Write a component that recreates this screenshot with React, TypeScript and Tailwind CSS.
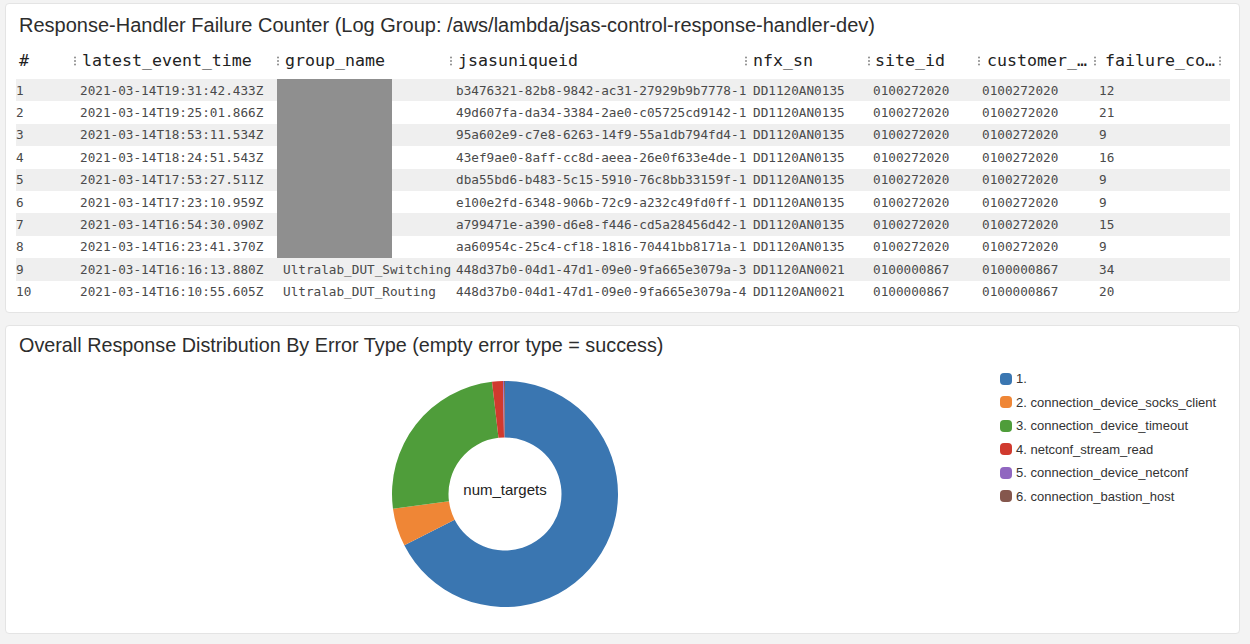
import React from "react";

const COLS = [57, 203, 173, 295, 123, 110, 116, 137];
const DATA_PL = [0, 7, 7, 7, 9, 6, 5, 6];
const HEAD_ML = [0, 5, 5, 5, 5, 4, 6, 8];
const HEADERS = ["#", "latest_event_time", "group_name", "jsasuniqueid", "nfx_sn", "site_id", "customer_…", "failure_co…"];

const rows: string[][] = [
  ["1", "2021-03-14T19:31:42.433Z", "", "b3476321-82b8-9842-ac31-27929b9b7778-1", "DD1120AN0135", "0100272020", "0100272020", "12"],
  ["2", "2021-03-14T19:25:01.866Z", "", "49d607fa-da34-3384-2ae0-c05725cd9142-1", "DD1120AN0135", "0100272020", "0100272020", "21"],
  ["3", "2021-03-14T18:53:11.534Z", "", "95a602e9-c7e8-6263-14f9-55a1db794fd4-1", "DD1120AN0135", "0100272020", "0100272020", "9"],
  ["4", "2021-03-14T18:24:51.543Z", "", "43ef9ae0-8aff-cc8d-aeea-26e0f633e4de-1", "DD1120AN0135", "0100272020", "0100272020", "16"],
  ["5", "2021-03-14T17:53:27.511Z", "", "dba55bd6-b483-5c15-5910-76c8bb33159f-1", "DD1120AN0135", "0100272020", "0100272020", "9"],
  ["6", "2021-03-14T17:23:10.959Z", "", "e100e2fd-6348-906b-72c9-a232c49fd0ff-1", "DD1120AN0135", "0100272020", "0100272020", "9"],
  ["7", "2021-03-14T16:54:30.090Z", "", "a799471e-a390-d6e8-f446-cd5a28456d42-1", "DD1120AN0135", "0100272020", "0100272020", "15"],
  ["8", "2021-03-14T16:23:41.370Z", "", "aa60954c-25c4-cf18-1816-70441bb8171a-1", "DD1120AN0135", "0100272020", "0100272020", "9"],
  ["9", "2021-03-14T16:16:13.880Z", "Ultralab_DUT_Switching", "448d37b0-04d1-47d1-09e0-9fa665e3079a-3", "DD1120AN0021", "0100000867", "0100000867", "34"],
  ["10", "2021-03-14T16:10:55.605Z", "Ultralab_DUT_Routing", "448d37b0-04d1-47d1-09e0-9fa665e3079a-4", "DD1120AN0021", "0100000867", "0100000867", "20"],
];

const segments = [
  { a0: 0, a1: 243, color: "#3a76b1" },
  { a0: 243, a1: 262.5, color: "#ef8636" },
  { a0: 262.5, a1: 353.4, color: "#4f9d3a" },
  { a0: 353.4, a1: 359.0, color: "#d03a2e" },
  { a0: 359.0, a1: 359.5, color: "#9066c0" },
  { a0: 359.5, a1: 360, color: "#85574d" },
];

const legend = [
  { label: "1.", color: "#3a76b1" },
  { label: "2. connection_device_socks_client", color: "#ef8636" },
  { label: "3. connection_device_timeout", color: "#4f9d3a" },
  { label: "4. netconf_stream_read", color: "#d03a2e" },
  { label: "5. connection_device_netconf", color: "#9066c0" },
  { label: "6. connection_bastion_host", color: "#85574d" },
];

function arcPath(a0: number, a1: number, r0: number, r1: number, cx: number, cy: number) {
  const p = (a: number, r: number) => {
    const t = ((a - 90) * Math.PI) / 180;
    return [cx + r * Math.cos(t), cy + r * Math.sin(t)];
  };
  const large = a1 - a0 > 180 ? 1 : 0;
  const [x0, y0] = p(a0, r1);
  const [x1, y1] = p(a1, r1);
  const [x2, y2] = p(a1, r0);
  const [x3, y3] = p(a0, r0);
  return `M${x0},${y0} A${r1},${r1} 0 ${large} 1 ${x1},${y1} L${x2},${y2} A${r0},${r0} 0 ${large} 0 ${x3},${y3} Z`;
}

function Dots() {
  return (
    <svg width="4" height="12" viewBox="0 0 4 12" className="shrink-0">
      <circle cx="2" cy="2.5" r="1" fill="#8a8a8a" />
      <circle cx="2" cy="6" r="1" fill="#8a8a8a" />
      <circle cx="2" cy="9.5" r="1" fill="#8a8a8a" />
    </svg>
  );
}

export default function App() {
  return (
    <div className="w-[1250px] h-[644px] bg-[#f3f3f3] pt-[3px] pl-[5px] overflow-hidden">
      {/* Panel 1 */}
      <div className="w-[1235px] h-[310px] bg-white border border-[#e4e4e4] rounded-[4px] pt-[8px] pl-[10px]">
        <div className="h-[26px] pl-[3px] flex items-center font-['Liberation_Sans',Arial,sans-serif] text-[20px] text-[#2d2d2d] whitespace-nowrap">
          Response-Handler Failure Counter (Log Group: /aws/lambda/jsas-control-response-handler-dev)
        </div>
        <div className="font-['DejaVu_Sans_Mono',monospace]">
          <div className="flex h-[41px] items-center pt-[5px]">
            {HEADERS.map((h, i) => (
              <div key={i} style={{ width: COLS[i] }} className="flex items-center shrink-0">
                {i === 0 ? (
                  <span className="pl-[3px] text-[16.6px] text-[#222]">#</span>
                ) : (
                  <>
                    <Dots />
                    <span style={{ marginLeft: HEAD_ML[i] }} className="text-[16.6px] text-[#222] whitespace-nowrap">
                      {h}
                    </span>
                    {i === 7 && (
                      <span className="ml-[3px] flex">
                        <Dots />
                      </span>
                    )}
                  </>
                )}
              </div>
            ))}
          </div>
          <div>
            {rows.map((r, ri) => (
              <div
                key={ri}
                className={`flex h-[22.4px] items-center ${ri % 2 === 0 ? "bg-[#efefef]" : "bg-white"}`}
                style={{ width: 1214 }}
              >
                {r.map((c, ci) => (
                  <div
                    key={ci}
                    style={{ width: COLS[ci], paddingLeft: DATA_PL[ci] }}
                    className="shrink-0 h-full flex items-center whitespace-nowrap overflow-visible text-[12.7px] text-[#4a4a4a]"
                  >
                    {ci === 2 && ri < 8 ? (
                      <div className="ml-[-6px] w-[115px] h-full bg-[#8f8f8f]" />
                    ) : (
                      c
                    )}
                  </div>
                ))}
              </div>
            ))}
          </div>
        </div>
      </div>

      {/* Panel 2 */}
      <div className="mt-[12px] w-[1235px] h-[309px] bg-white border border-[#e4e4e4] rounded-[4px] pt-[7px]">
        <div className="h-[26px] pl-[13px] flex items-center font-['Liberation_Sans',Arial,sans-serif] text-[19.8px] text-[#2d2d2d] whitespace-nowrap">
          Overall Response Distribution By Error Type (empty error type = success)
        </div>
        <div className="flex items-start">
          <svg width="230" height="230" viewBox="0 0 230 230" className="ml-[384px] mt-[20px] shrink-0">
            {segments.map((s, i) => (
              <path key={i} d={arcPath(s.a0, s.a1, 56.5, 113, 115, 115)} fill={s.color} />
            ))}
            <text
              x="115"
              y="110"
              textAnchor="middle"
              dominantBaseline="central"
              fontFamily="Liberation Sans, Arial, sans-serif"
              fontSize="15"
              fill="#222"
            >
              num_targets
            </text>
          </svg>
          <div className="ml-[380px] mt-[8px] flex flex-col font-['Liberation_Sans',Arial,sans-serif]">
            {legend.map((l, i) => (
              <div key={i} className="h-[23.5px] flex items-center">
                <span className="w-[12px] h-[12px] rounded-[4px] shrink-0" style={{ backgroundColor: l.color }} />
                <span className="ml-[4px] text-[13px] text-[#333] whitespace-nowrap">{l.label}</span>
              </div>
            ))}
          </div>
        </div>
      </div>
    </div>
  );
}
